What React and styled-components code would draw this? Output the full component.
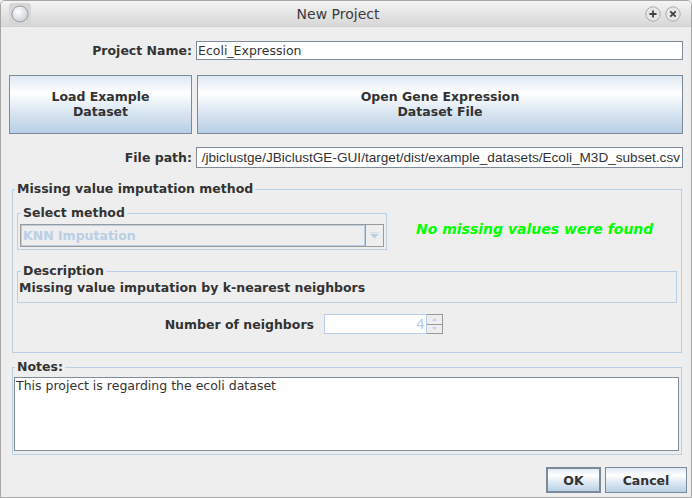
import React from "react";
import styled, { createGlobalStyle } from "styled-components";

const GlobalStyle = createGlobalStyle`
  html, body { margin: 0; padding: 0; background: #eeeeee; }
  * { box-sizing: border-box; }
`;

const Window = styled.div`
  width: 692px;
  height: 498px;
  background: #eeeeee;
  border: 1px solid #a6a6a6;
  border-radius: 5px 5px 0 0;
  display: flex;
  flex-direction: column;
  overflow: hidden;
  font-family: "DejaVu Sans", "Noto Sans", sans-serif;
  font-size: 12.5px;
  color: #333333;
`;

const TitleBar = styled.div`
  height: 26px;
  flex: none;
  display: flex;
  align-items: center;
  padding: 0 10px 0 8px;
  background: linear-gradient(#f4f4f4, #e2e2e2 60%, #d8d8d8);
  border-bottom: 1px solid #d0d0d0;
`;

const Title = styled.div`
  flex: 1;
  text-align: center;
  font-size: 14px;
  color: #3a3a3a;
`;

const TitleButtons = styled.div`
  display: flex;
  gap: 4px;
  align-items: center;
`;

const Body = styled.div`
  padding: 0 8px;
`;

const FormRow = styled.div`
  display: grid;
  grid-template-columns: 183px 1fr;
  column-gap: ${(p) => p.gap || 4}px;
  align-items: center;
  margin-top: ${(p) => p.top}px;
`;

const Label = styled.label`
  font-weight: bold;
  text-align: right;
  white-space: nowrap;
`;

const TextField = styled.div`
  height: ${(p) => p.h}px;
  background: #ffffff;
  border: 1px solid #7f8c99;
  box-shadow: inset -1px -1px 0 #ffffff;
  padding: 0 2px 0 1px;
  display: flex;
  align-items: center;
  overflow: hidden;
  white-space: nowrap;
  color: #333;
  font-family: ${(p) => (p.arial ? '"Liberation Sans", Arial, sans-serif' : '"DejaVu Sans", sans-serif')};
  font-size: ${(p) => (p.arial ? "13.6px" : "12.5px")};
  justify-content: ${(p) => (p.arial ? "flex-end" : "flex-start")};
`;

const BigButton = styled.button`
  height: 59px;
  border: 1px solid #7a8a99;
  background: linear-gradient(#dde8f3 0%, #ffffff 30%, #dde8f3 60%, #b8cfe5 100%);
  font-family: "DejaVu Sans", sans-serif;
  font-weight: bold;
  font-size: 12.5px;
  line-height: 15px;
  color: #333;
  padding: 0 0 2px;
  margin: 0;
`;

const Group = styled.fieldset`
  margin: ${(p) => p.m || "0"};
  padding: 0;
  border: 1px solid #b8cfe5;
  min-width: 0;
  ${(p) => p.w && `width: ${p.w}px; flex: none;`}
`;

const Legend = styled.legend`
  font-weight: bold;
  line-height: 14px;
  padding: 0 2px;
  margin-left: ${(p) => p.ml || 2}px;
  color: #333;
`;

const GroupInner = styled.div`
  padding: ${(p) => p.pad};
`;

const MethodRow = styled.div`
  display: flex;
  align-items: center;
`;

const Combo = styled.div`
  height: 23px;
  display: flex;
  border: 1px solid #9a9a9a;
  background: #eeeeee;
`;

const ComboText = styled.div`
  flex: 1;
  border: 1px solid #b8cfe5;
  font-weight: bold;
  color: #b8cfe5;
  display: flex;
  align-items: center;
  padding-left: 1px;
`;

const ComboArrow = styled.div`
  width: 18px;
  border-left: 1px solid #9a9a9a;
  display: flex;
  align-items: center;
  justify-content: center;
`;

const Status = styled.div`
  margin-left: 29px;
  padding-top: 2px;
  font-size: 14px;
  font-weight: bold;
  font-style: italic;
  color: #00ff00;
  white-space: nowrap;
`;

const DescText = styled.div`
  font-weight: bold;
  line-height: 14px;
  white-space: nowrap;
`;

const NeighborRow = styled.div`
  display: flex;
  align-items: center;
  margin-top: 11px;
  height: 20px;
`;

const NeighborLabel = styled.div`
  width: 297px;
  text-align: right;
  font-weight: bold;
  margin-right: 10px;
`;

const Spinner = styled.div`
  display: flex;
  height: 20px;
  width: 119px;
`;

const SpinField = styled.div`
  flex: 1;
  background: #ffffff;
  border: 1px solid #b8cfe5;
  color: #b8cfe5;
  font-size: 14px;
  text-align: right;
  padding-right: 1px;
  line-height: 18px;
`;

const SpinButtons = styled.div`
  width: 16px;
  display: flex;
  flex-direction: column;
  border: 1px solid #9a9a9a;
  border-left: none;
`;

const SpinButton = styled.div`
  flex: 1;
  display: flex;
  align-items: center;
  justify-content: center;
  ${(p) => p.top && "border-bottom: 1px solid #9a9a9a;"}
`;

const NotesArea = styled.div`
  height: 74px;
  background: #ffffff;
  border: 1px solid #7f8c99;
  padding: 0 1px;
  line-height: 15px;
  color: #333;
`;

const Footer = styled.div`
  flex: 1;
  display: flex;
  justify-content: flex-end;
  align-items: flex-start;
  gap: 4px;
  padding: 12px 4px 0 0;
`;

const DialogButton = styled.button`
  height: 26px;
  width: ${(p) => p.w}px;
  margin: 0;
  padding: 0;
  border: 1px solid #7a8a99;
  ${(p) => p.primary && "box-shadow: inset 0 0 0 1px #7a8a99;"}
  background: linear-gradient(#dde8f3 0%, #ffffff 30%, #dde8f3 60%, #b8cfe5 100%);
  font-family: "DejaVu Sans", sans-serif;
  font-weight: bold;
  font-size: 12.5px;
  color: #333;
`;

const WindowIcon = () => (
  <svg width="22" height="22" viewBox="0 0 22 22">
    <defs>
      <radialGradient id="ball" cx="40%" cy="35%" r="70%">
        <stop offset="0%" stopColor="#ffffff" />
        <stop offset="100%" stopColor="#c8ccd4" />
      </radialGradient>
    </defs>
    <rect x="0" y="0" width="22" height="22" rx="3" fill="#d6d6d6" />
    <circle cx="11" cy="11" r="8" fill="url(#ball)" stroke="#9aa0a8" strokeWidth="1" />
  </svg>
);

const RoundButton = ({ kind }) => (
  <svg width="16" height="16" viewBox="0 0 16 16">
    <circle cx="8" cy="8" r="7.2" fill="#e6e6e6" stroke="#a8adb4" strokeWidth="1" />
    {kind === "plus" ? (
      <path d="M8 4.5v7M4.5 8h7" stroke="#404040" strokeWidth="1.8" />
    ) : (
      <path d="M5.3 5.3l5.4 5.4M10.7 5.3l-5.4 5.4" stroke="#404040" strokeWidth="1.8" />
    )}
  </svg>
);

const DownArrow = ({ color = "#b8cfe5", size = 9 }) => (
  <svg width={size} height={size / 2 + 2} viewBox="0 0 10 7">
    <path d="M0 0h10" stroke={color} strokeWidth="1" />
    <path d="M0 2h10L5 7z" fill={color} />
  </svg>
);

const TinyArrow = ({ up }) => (
  <svg width="5" height="3" viewBox="0 0 5 3">
    <path d={up ? "M0 3h5L2.5 0z" : "M0 0h5L2.5 3z"} fill="#c4d4e6" />
  </svg>
);

export default function App() {
  return (
    <Window>
      <GlobalStyle />
      <TitleBar>
        <WindowIcon />
        <Title>New Project</Title>
        <TitleButtons>
          <RoundButton kind="plus" />
          <RoundButton kind="close" />
        </TitleButtons>
      </TitleBar>

      <Body>
        <FormRow top={14}>
          <Label>Project Name:</Label>
          <TextField h={19}>Ecoli_Expression</TextField>
        </FormRow>

        <FormRow top={15} gap={5}>
          <BigButton>
            Load Example
            <br />
            Dataset
          </BigButton>
          <BigButton>
            Open Gene Expression
            <br />
            Dataset File
          </BigButton>
        </FormRow>

        <FormRow top={13}>
          <Label>File path:</Label>
          <TextField h={21} arial>
            /jbiclustge/JBiclustGE-GUI/target/dist/example_datasets/Ecoli_M3D_subset.csv
          </TextField>
        </FormRow>

        <Group m="14px 1px 0 3px">
          <Legend>Missing value imputation method</Legend>
          <GroupInner pad="10px 4px 18px 4px">
            <MethodRow>
              <Group w={370}>
                <Legend ml={3}>Select method</Legend>
                <GroupInner pad="4px 2px 2px 2px">
                  <Combo>
                    <ComboText>KNN Imputation</ComboText>
                    <ComboArrow>
                      <DownArrow />
                    </ComboArrow>
                  </Combo>
                </GroupInner>
              </Group>
              <Status>No missing values were found</Status>
            </MethodRow>

            <Group m="14px 0 0 0">
              <Legend ml={3}>Description</Legend>
              <GroupInner pad="3px 1px 7px 1px">
                <DescText>Missing value imputation by k-nearest neighbors</DescText>
              </GroupInner>
            </Group>

            <NeighborRow>
              <NeighborLabel>Number of neighbors</NeighborLabel>
              <Spinner>
                <SpinField>4</SpinField>
                <SpinButtons>
                  <SpinButton top>
                    <TinyArrow up />
                  </SpinButton>
                  <SpinButton>
                    <TinyArrow />
                  </SpinButton>
                </SpinButtons>
              </Spinner>
            </NeighborRow>
          </GroupInner>
        </Group>

        <Group m="7px 1px 0 3px">
          <Legend>Notes:</Legend>
          <GroupInner pad="3px 2px 3px 1px">
            <NotesArea>This project is regarding the ecoli dataset</NotesArea>
          </GroupInner>
        </Group>
      </Body>

      <Footer>
        <DialogButton w={55} primary>
          OK
        </DialogButton>
        <DialogButton w={82}>Cancel</DialogButton>
      </Footer>
    </Window>
  );
}
